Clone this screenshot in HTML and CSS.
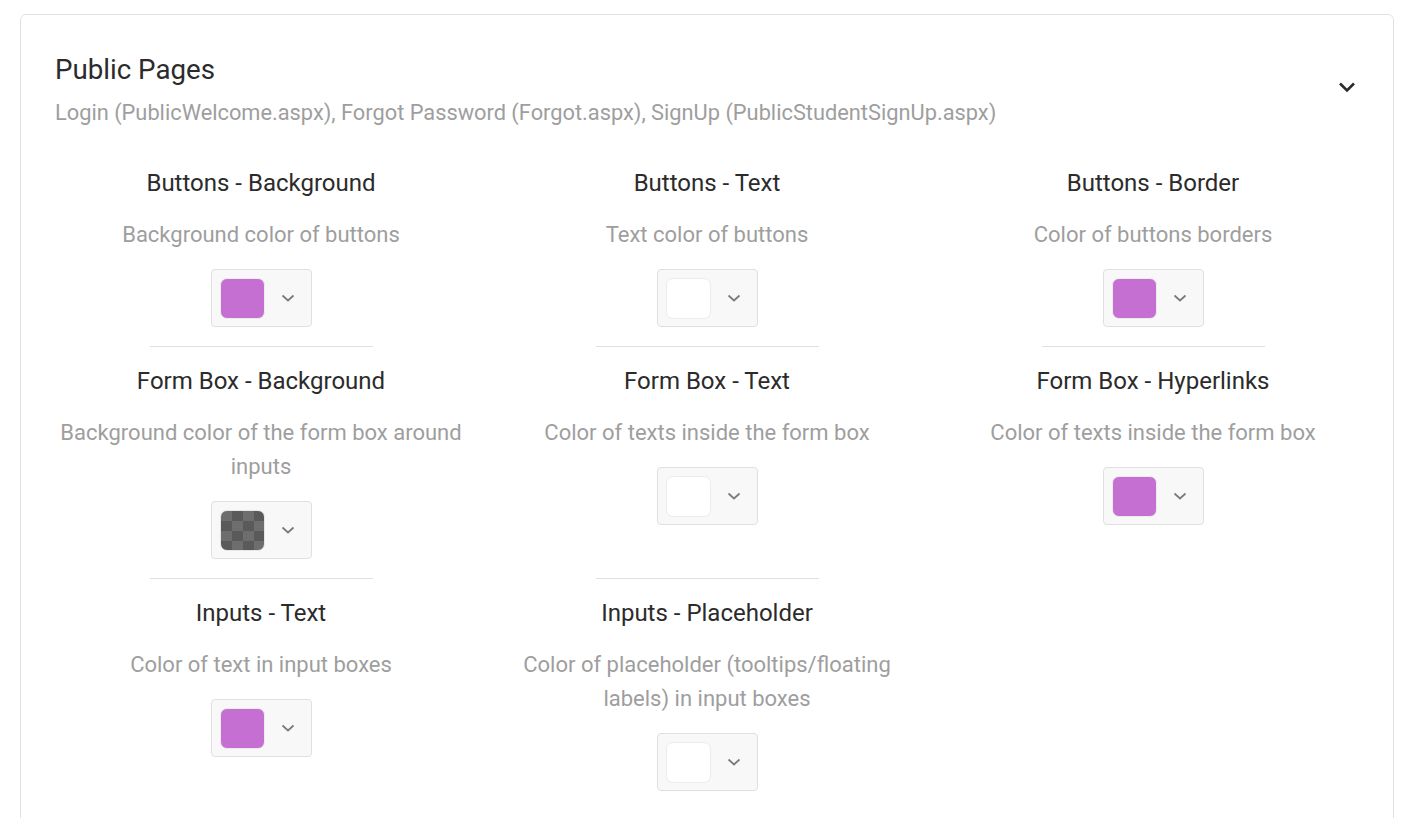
FILE: index.html
```html
<!DOCTYPE html>
<html lang="en">
<head>
    <meta charset="UTF-8">
    <title>Public Pages</title>
    <link rel="stylesheet" href="styles.css">
</head>
<body>
<div class="card">
    <div class="card-head">
        <div>
            <h2 class="card-title">Public Pages</h2>
            <p class="card-sub">Login (PublicWelcome.aspx), Forgot Password (Forgot.aspx), SignUp (PublicStudentSignUp.aspx)</p>
        </div>
        <svg class="head-chevron" width="24" height="24" viewBox="0 0 24 24"><path d="M5 8.5l7 7 7-7" fill="none" stroke="#2b2b2b" stroke-width="2.6"/></svg>
    </div>

    <div class="grid">
        <div class="item first">
            <h3 class="item-title">Buttons - Background</h3>
            <p class="item-desc">Background color of buttons</p>
            <div class="picker"><span class="swatch purple"></span><span class="caret"><svg width="14" height="8" viewBox="0 0 14 8"><path d="M1.5 1.5l5.5 5 5.5-5" fill="none" stroke="#7a7a7a" stroke-width="1.7"/></svg></span></div>
        </div>
        <div class="item first">
            <h3 class="item-title">Buttons - Text</h3>
            <p class="item-desc">Text color of buttons</p>
            <div class="picker"><span class="swatch white"></span><span class="caret"><svg width="14" height="8" viewBox="0 0 14 8"><path d="M1.5 1.5l5.5 5 5.5-5" fill="none" stroke="#7a7a7a" stroke-width="1.7"/></svg></span></div>
        </div>
        <div class="item first">
            <h3 class="item-title">Buttons - Border</h3>
            <p class="item-desc">Color of buttons borders</p>
            <div class="picker"><span class="swatch purple"></span><span class="caret"><svg width="14" height="8" viewBox="0 0 14 8"><path d="M1.5 1.5l5.5 5 5.5-5" fill="none" stroke="#7a7a7a" stroke-width="1.7"/></svg></span></div>
        </div>

        <div class="item">
            <h3 class="item-title">Form Box - Background</h3>
            <p class="item-desc">Background color of the form box around inputs</p>
            <div class="picker"><span class="swatch checker"></span><span class="caret"><svg width="14" height="8" viewBox="0 0 14 8"><path d="M1.5 1.5l5.5 5 5.5-5" fill="none" stroke="#7a7a7a" stroke-width="1.7"/></svg></span></div>
        </div>
        <div class="item">
            <h3 class="item-title">Form Box - Text</h3>
            <p class="item-desc">Color of texts inside the form box</p>
            <div class="picker"><span class="swatch white"></span><span class="caret"><svg width="14" height="8" viewBox="0 0 14 8"><path d="M1.5 1.5l5.5 5 5.5-5" fill="none" stroke="#7a7a7a" stroke-width="1.7"/></svg></span></div>
        </div>
        <div class="item">
            <h3 class="item-title">Form Box - Hyperlinks</h3>
            <p class="item-desc">Color of texts inside the form box</p>
            <div class="picker"><span class="swatch purple"></span><span class="caret"><svg width="14" height="8" viewBox="0 0 14 8"><path d="M1.5 1.5l5.5 5 5.5-5" fill="none" stroke="#7a7a7a" stroke-width="1.7"/></svg></span></div>
        </div>

        <div class="item">
            <h3 class="item-title">Inputs - Text</h3>
            <p class="item-desc">Color of text in input boxes</p>
            <div class="picker"><span class="swatch purple"></span><span class="caret"><svg width="14" height="8" viewBox="0 0 14 8"><path d="M1.5 1.5l5.5 5 5.5-5" fill="none" stroke="#7a7a7a" stroke-width="1.7"/></svg></span></div>
        </div>
        <div class="item">
            <h3 class="item-title">Inputs - Placeholder</h3>
            <p class="item-desc">Color of placeholder (tooltips/floating labels) in input boxes</p>
            <div class="picker"><span class="swatch white"></span><span class="caret"><svg width="14" height="8" viewBox="0 0 14 8"><path d="M1.5 1.5l5.5 5 5.5-5" fill="none" stroke="#7a7a7a" stroke-width="1.7"/></svg></span></div>
        </div>
    </div>
</div>
</body>
</html>
```

FILE: styles.css
```css
* {
    margin: 0;
    padding: 0;
    box-sizing: border-box;
}
body {
    margin: 14px 34px 0 20px;
    font-family: Roboto, "Liberation Sans", sans-serif;
    background: #fff;
    color: #2b2b2b;
}
.card {
    border: 1px solid #e2e2e2;
    border-radius: 6px;
    padding: 39px 34px 40px 34px;
}
.card-head {
    display: flex;
    justify-content: space-between;
    align-items: center;
}
.card-title {
    font-size: 27.7px;
    font-weight: 400;
    line-height: 32px;
}
.card-sub {
    margin-top: 12px;
    font-size: 21.8px;
    line-height: 30px;
    color: #9e9e9e;
}
.head-chevron {
    margin-bottom: 8px;
}
.grid {
    margin-top: 20px;
    display: grid;
    grid-template-columns: repeat(3, 1fr);
    column-gap: 34px;
}
.item {
    text-align: center;
    padding-bottom: 19px;
}
.item::before {
    content: "";
    display: block;
    width: 223px;
    height: 1px;
    margin: 0 auto 19px;
    background: #e0e0e0;
}
.item.first::before {
    background: transparent;
}
.item-title {
    font-size: 24px;
    font-weight: 400;
    line-height: 30px;
    color: #2b2b2b;
}
.item-desc {
    margin: 20px auto 0;
    max-width: 412px;
    font-size: 22px;
    line-height: 34px;
    color: #9e9e9e;
}
.picker {
    margin: 17px auto 0;
    width: 101px;
    height: 58px;
    display: flex;
    align-items: center;
    padding: 0 0 0 8px;
    border: 1px solid #e0e0e0;
    border-radius: 4px;
    background: #f8f8f8;
}
.swatch {
    width: 45px;
    height: 41px;
    border-radius: 7px;
    border: 1.5px solid #ececec;
}
.swatch.purple {
    background: #c56fd3;
}
.swatch.white {
    background: #fff;
}
.swatch.checker {
    border-color: #e6e6e6;
    background: conic-gradient(#5a5a5a 25%, #6e6e6e 0 50%, #5a5a5a 0 75%, #6e6e6e 0) 0 0 / 22px 20px;
}
.caret {
    flex: 1;
    display: flex;
    justify-content: center;
    align-items: center;
}
```
